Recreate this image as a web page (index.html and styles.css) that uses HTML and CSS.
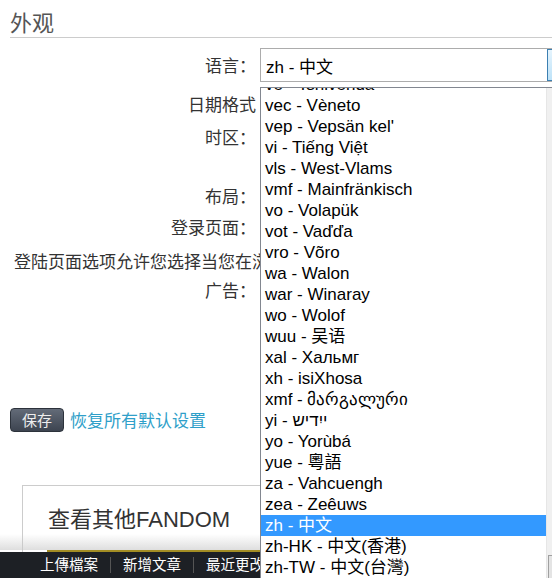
FILE: index.html
```html
<!DOCTYPE html>
<html lang="zh-CN">
<head>
  <meta charset="UTF-8" />
  <meta name="viewport" content="width=device-width, initial-scale=1.0" />
  <title>参数设置 - 外观</title>
  <link rel="stylesheet" href="styles.css">
</head>
<body>
  <div class="page">
    <h2 class="section-title">外观</h2>

    <div class="prefs">
      <div class="row row-lang">
        <div class="label">语言：</div>
        <div class="value">
          <div class="select">
            <span class="select-text">zh - 中文</span>
            <span class="select-btn"></span>
          </div>
        </div>
      </div>
      <div class="row row-date">
        <div class="label">日期格式</div>
      </div>
      <div class="row row-tz">
        <div class="label">时区：</div>
      </div>
      <div class="row row-layout">
        <div class="label">布局：</div>
      </div>
      <div class="row row-login">
        <div class="label">登录页面：</div>
      </div>
      <p class="hint">登陆页面选项允许您选择当您在浏</p>
      <div class="row row-ads">
        <div class="label">广告：</div>
      </div>
    </div>

    <div class="actions">
      <button type="button" class="btn-save">保存</button>
      <a class="reset" href="#">恢复所有默认设置</a>
    </div>

    <div class="fandom-box">
      <h3>查看其他FANDOM</h3>
    </div>
  </div>

  <div class="toolbar">
    <a href="#">上傳檔案</a>
    <a href="#">新增文章</a>
    <a href="#">最近更改</a>
  </div>

  <!-- 打开的语言下拉列表 -->
  <div class="dropdown">
    <ul class="options">
      <li>ve - Tshivenda</li>
      <li>vec - Vèneto</li>
      <li>vep - Vepsän kel'</li>
      <li>vi - Tiếng Việt</li>
      <li>vls - West-Vlams</li>
      <li>vmf - Mainfränkisch</li>
      <li>vo - Volapük</li>
      <li>vot - Vaďďa</li>
      <li>vro - Võro</li>
      <li>wa - Walon</li>
      <li>war - Winaray</li>
      <li>wo - Wolof</li>
      <li>wuu - 吴语</li>
      <li>xal - Хальмг</li>
      <li>xh - isiXhosa</li>
      <li>xmf - მარგალური</li>
      <li>yi - ייִדיש</li>
      <li>yo - Yorùbá</li>
      <li>yue - 粵語</li>
      <li>za - Vahcuengh</li>
      <li>zea - Zeêuws</li>
      <li class="selected">zh - 中文</li>
      <li>zh-HK - 中文(香港)</li>
      <li>zh-TW - 中文(台灣)</li>
    </ul>
    <div class="scrollbar"><span class="thumb"></span></div>
  </div>
</body>
</html>
```

FILE: styles.css
```css
/* 偏好设置页 */
:root { --text: #333; --line: #ccc; --link: #2f9fc9; --hl: #3399ff; }
* { margin: 0; padding: 0; box-sizing: border-box; }
html, body { height: 100%; overflow: hidden; }
body {
  background: #fff;
  font-family: 'Liberation Sans', 'Noto Sans CJK SC', sans-serif;
  color: var(--text);
  position: relative;
}
.section-title {
  font-size: 22px; font-weight: normal; color: #555;
  line-height: 27px; padding-top: 10px; margin-left: 10px;
  border-bottom: 1px solid var(--line);
}
.prefs { font-size: 17px; }
.row { display: flex; }
.label { width: 256px; text-align: right; line-height: 26px; white-space: nowrap; flex-shrink: 0; }
.row-lang { margin-top: 16px; height: 34px; }
.row-date { margin-top: 5px; height: 33px; }
.row-tz { height: 59px; }
.row-layout { height: 31px; }
.row-login { height: 34px; }
.hint { height: 29px; line-height: 26px; padding-left: 14px; white-space: nowrap; }
.row-ads { height: 26px; }

.value { flex: 1; margin-left: 4px; margin-top: -6px; }
.select {
  display: flex; align-items: center; height: 34px;
  border: 1px solid #acacac; background: #fff;
  padding-left: 5px; font-size: 17px; color: #000;
}
.select-text { flex: 1; }
.select-btn {
  width: 17px; height: 32px; margin-right: -13px;
  background: linear-gradient(#e5f4fd, #bde2f8); border: 1px solid #3c7fb1;
}

.actions { display: flex; align-items: center; gap: 6px; margin: 102px 0 0 10px; }
.btn-save {
  width: 54px; height: 24px; border-radius: 4px;
  border: 1px solid #2c323b;
  background: linear-gradient(#636b78, #3d4450);
  color: #eee; font: 15px 'Noto Sans CJK SC', sans-serif;
}
.reset { color: var(--link); text-decoration: none; font-size: 17px; }

.fandom-box {
  margin: 53px 0 0 22px; height: 120px;
  border: 1px solid var(--line); border-right: none;
  padding: 20px 0 0 25px;
}
.fandom-box h3 { font-size: 22px; font-weight: normal; color: #333; line-height: 28px; }

.toolbar {
  position: absolute; left: 0; right: 0; bottom: 0; height: 26px;
  background: #1d2025; display: flex; align-items: center; padding-left: 28px;
}
.toolbar::before {
  content: ''; position: absolute; left: 47px; right: 0; top: -2px; height: 2px; background: #a38d24;
}
.toolbar::after {
  content: ''; position: absolute; left: 0; right: 0; top: -18px; height: 16px;
  background: linear-gradient(rgba(220,220,220,0), rgba(200,200,200,0.6));
}
.toolbar a {
  color: #fff; text-decoration: none; font-size: 14.5px;
  padding: 0 12px; line-height: 16px;
}
.toolbar a + a { border-left: 1px solid #555; }

/* 展开的下拉列表，盖在页面和工具栏之上 */
.dropdown {
  position: absolute; left: 260px; top: 87px; width: 304px; height: 520px;
  display: flex; background: #fff; z-index: 10;
  border: 1px solid #828790; border-right: none;
  overflow: hidden;
}
.options { list-style: none; width: 285px; margin-top: -14px; font-size: 17px; color: #000; }
.options li { height: 21px; line-height: 21px; padding-left: 4px; white-space: nowrap; }
.options li.selected { background: var(--hl); color: #fff; }
.scrollbar { width: 17px; background: #f0f0f0; border-left: 1px solid #e6e6e6; position: relative; }
.thumb {
  position: absolute; left: 1px; right: 1px; top: 467px; height: 60px;
  background: #e4e4e4; border: 1px solid #a0a0a0;
}
```
